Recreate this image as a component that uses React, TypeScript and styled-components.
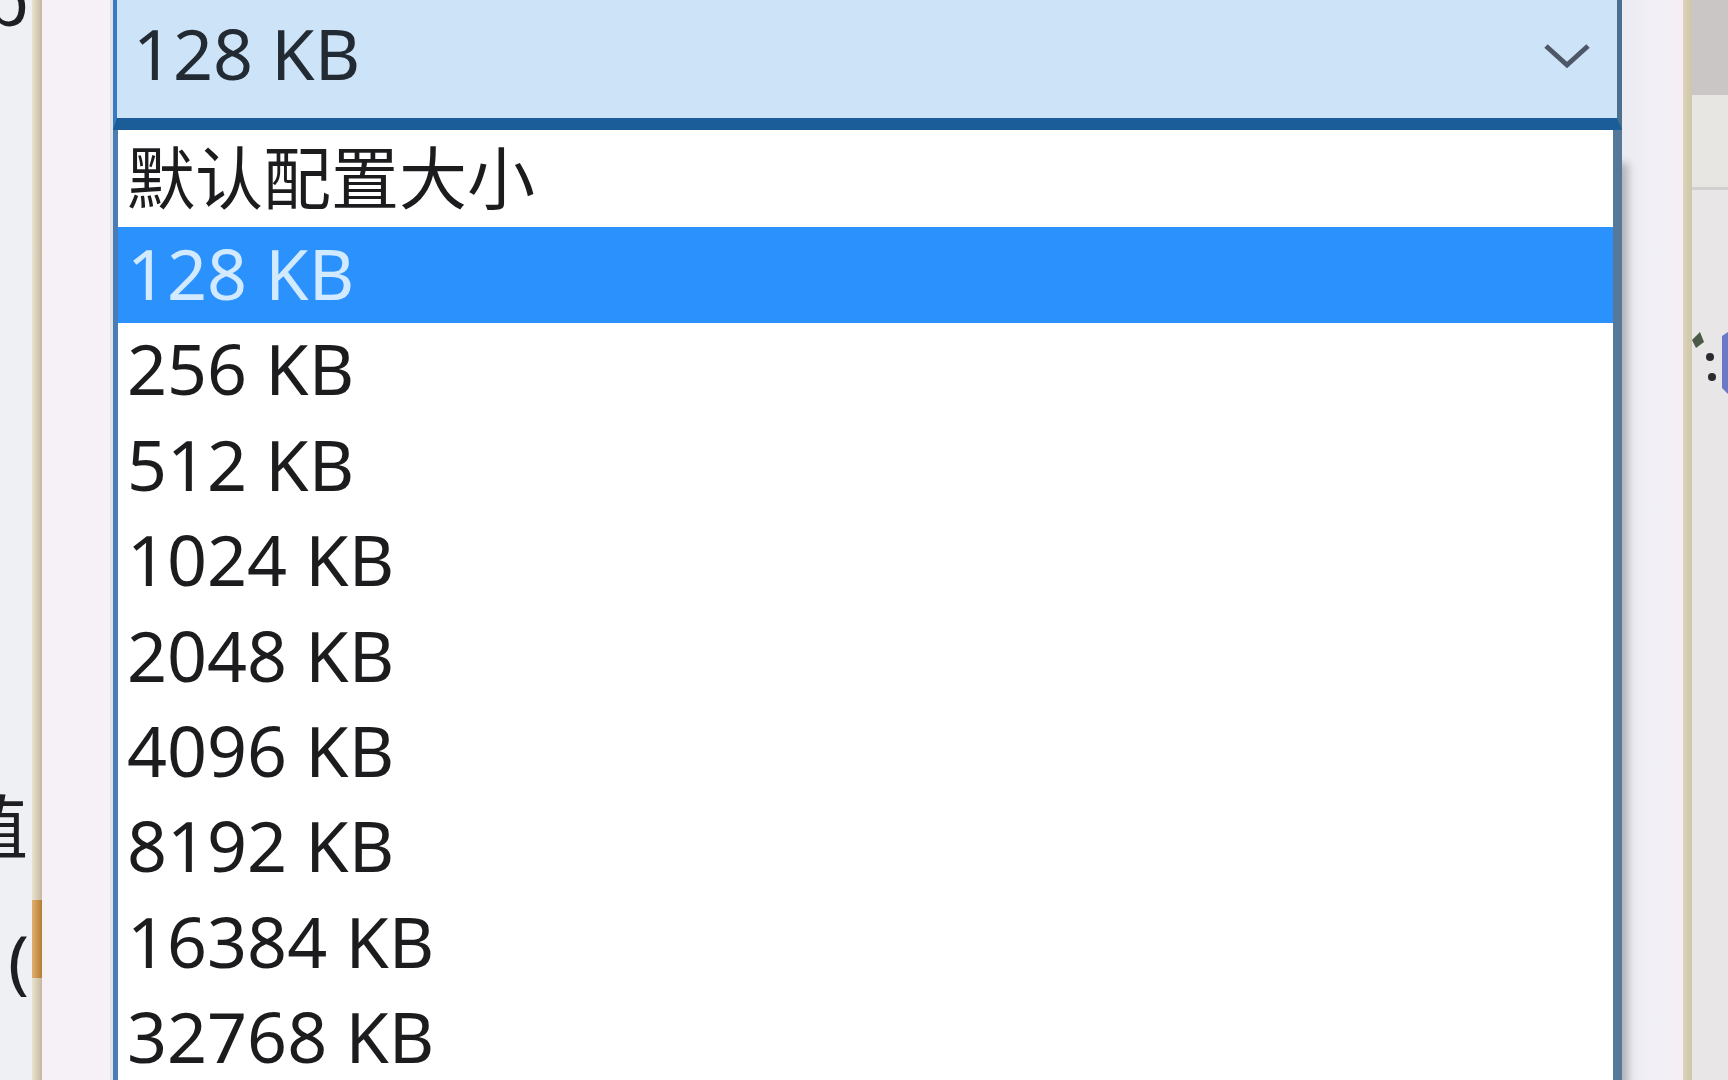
import styled, { createGlobalStyle } from 'styled-components';

const GlobalStyle = createGlobalStyle`
    html, body {
        margin: 0;
        padding: 0;
        background: #ffffff;
        overflow: hidden;
    }
    * {
        box-sizing: border-box;
    }
`;

const sizeList = [
    '默认配置大小',
    '128 KB',
    '256 KB',
    '512 KB',
    '1024 KB',
    '2048 KB',
    '4096 KB',
    '8192 KB',
    '16384 KB',
    '32768 KB',
    '65536 KB',
];

const selectedValue = '128 KB';

const Screen = styled.div`
    display: flex;
    width: 1728px;
    height: 1080px;
    overflow: hidden;
    font-family: "Noto Sans", "Noto Sans CJK SC", sans-serif;
`;

const LeftPane = styled.div`
    display: flex;
    width: 113px;
    flex-shrink: 0;
    height: 100%;
`;

const LabelColumn = styled.div`
    display: flex;
    flex-direction: column;
    width: 32px;
    overflow: hidden;
    background: #eef0f4;
    color: #1f1f22;
    font-size: 70px;
    line-height: 1;
`;

const LabelFragment = styled.span<{ $top: number, $left: number }>`
    display: block;
    white-space: nowrap;
    margin-top: ${p => p.$top}px;
    margin-left: ${p => p.$left}px;
`;

const Stripe = styled.div`
    display: flex;
    flex-direction: column;
    width: 10px;
    background: linear-gradient(90deg, #e9e3d2 0%, #d6ccb6 55%, #c2b8a0 100%);
`;

const StripeMark = styled.div`
    margin-top: 900px;
    height: 78px;
    background: linear-gradient(90deg, #e0b070, #b77c32);
`;

const Gutter = styled.div`
    flex: 1;
    background: #f6f1f6;
    border-right: 3px solid #e1e1ea;
`;

const Combo = styled.div`
    position: relative;
    z-index: 1;
    display: flex;
    flex-direction: column;
    width: 1509px;
    flex-shrink: 0;
`;

const ComboHeader = styled.div`
    display: flex;
    align-items: center;
    justify-content: space-between;
    height: 130px;
    flex-shrink: 0;
    padding: 0 26px 12px 16px;
    background: #cde3f7;
    border-left: 4px solid #3a7ac2;
    border-right: 5px solid #4a6f8f;
    border-bottom: 12px solid #1b5d99;
    color: #222a33;
    font-size: 70px;
    line-height: 1;
`;

const Chevron = styled.svg`
    width: 48px;
    height: 26px;
    margin-top: 6px;
    flex-shrink: 0;
`;

const OptionList = styled.ul`
    flex: 1;
    margin: 0;
    padding: 2px 0 0;
    list-style: none;
    background: #ffffff;
    border-left: 5px solid #4a7db3;
    border-right: 9px solid #56799a;
    box-shadow: 9px 30px 8px -3px rgba(70, 70, 80, 0.35);
`;

const Option = styled.li<{ $selected: boolean }>`
    display: flex;
    align-items: center;
    height: 95.4px;
    padding: 0 0 4px 9px;
    font-size: 70px;
    line-height: 1;
    white-space: nowrap;
    background: ${p => p.$selected ? '#2b92fd' : 'transparent'};
    color: ${p => p.$selected ? '#d2eaff' : '#1c1c1f'};
`;

const OptionCjk = styled.span`
    font-size: 68px;
`;

const RightPane = styled.div`
    display: flex;
    flex: 1;
    height: 100%;
`;

const RightGutter = styled.div`
    width: 61px;
    background: linear-gradient(90deg, #ecebf1 0%, #f1eff7 50%, #f5eef4 100%);
`;

const RightStripe = styled.div`
    width: 9px;
    background: linear-gradient(90deg, #dcd5bc, #cfc6a8);
`;

const ToolPanel = styled.div`
    display: flex;
    flex-direction: column;
    flex: 1;
    background: #e9e6e8;
`;

const ToolPanelTop = styled.div`
    height: 95px;
    background: #cac6c5;
`;

const ToolPanelRow = styled.div`
    height: 95px;
    border-bottom: 3px solid #d2cfcf;
    background: #e8e6e3;
`;

const ToolIcon = styled.svg`
    width: 36px;
    height: 70px;
    margin-top: 142px;
`;

const isCjk = (text: string) => /[\u4e00-\u9fff]/.test(text);

export default function App() {
    return <>
        <GlobalStyle />
        <Screen>
            <LeftPane>
                <LabelColumn>
                    <LabelFragment $top={-36} $left={-14}>p</LabelFragment>
                    <LabelFragment $top={758} $left={-42}>值</LabelFragment>
                    <LabelFragment $top={62} $left={8}>(</LabelFragment>
                </LabelColumn>
                <Stripe>
                    <StripeMark />
                </Stripe>
                <Gutter />
            </LeftPane>
            <Combo>
                <ComboHeader>
                    <span>{selectedValue}</span>
                    <Chevron viewBox="0 0 48 26">
                        <polyline points="3,3 24,22 45,3" fill="none" stroke="#4d5767" strokeWidth="5" />
                    </Chevron>
                </ComboHeader>
                <OptionList>
                    {sizeList.map(size => <Option key={size} $selected={size === selectedValue}>
                        {isCjk(size) ? <OptionCjk>{size}</OptionCjk> : size}
                    </Option>)}
                </OptionList>
            </Combo>
            <RightPane>
                <RightGutter />
                <RightStripe />
                <ToolPanel>
                    <ToolPanelTop />
                    <ToolPanelRow />
                    <ToolIcon viewBox="0 0 36 70">
                        <path d="M0 8 L8 0 L12 10 L4 16 Z" fill="#4a5a48" />
                        <circle cx="18" cy="25" r="4" fill="#2a2a30" />
                        <circle cx="20" cy="45" r="4" fill="#2a2a30" />
                        <path d="M30 4 L36 0 L36 62 L30 56 Z" fill="#6a78c8" />
                    </ToolIcon>
                </ToolPanel>
            </RightPane>
        </Screen>
    </>;
}
